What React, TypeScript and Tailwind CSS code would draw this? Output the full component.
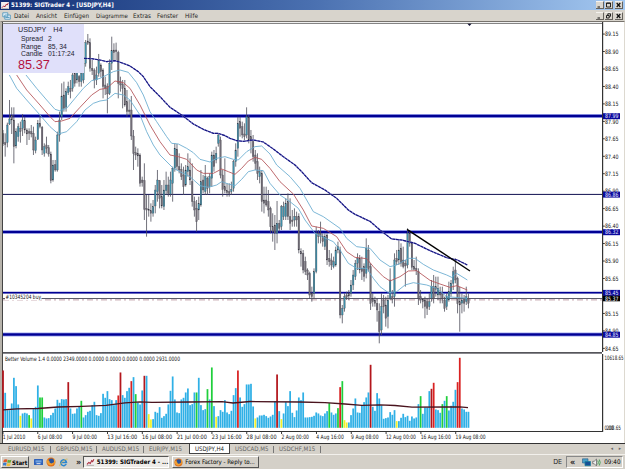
import React from 'react';

const STEP = 6.525;
const barX = (i: number) => 9 + i * STEP;

// high, low, body top, body bottom, 1 = rising (chart units, 3 per pixel)
const CANDLES = `330 378 340 372 0|340 410 368 374 0|308 382 315 368 1|240 315 297 312 1|262 342 285 300 0|262 430 300 380 0|325 385 335 378 1|310 365 320 350 1|305 368 325 335 0|282 348 300 325 1|290 340 302 330 0|325 375 330 342 0|325 360 335 340 0|315 352 335 342 0|320 405 340 390 0|350 400 360 392 1|300 360 310 358 1|285 325 310 320 0|318 405 322 390 0|370 410 380 400 1|350 400 375 385 0|375 410 383 402 0|395 490 402 482 0|420 485 435 480 1|420 455 434 450 0|335 455 345 450 1|275 365 300 345 1|190 300 228 290 1|185 275 225 265 0|205 275 215 262 1|185 225 200 218 1|180 235 205 215 0|140 215 165 205 1|150 200 160 190 0|145 190 155 180 1|165 200 170 185 0|150 200 160 185 1|120 190 130 180 1|60 140 68 130 1|42 75 63 70 0|55 155 68 145 0|120 165 145 152 0|145 205 150 180 0|140 195 165 180 1|102 170 120 160 1|130 172 135 155 0|145 235 150 200 0|170 225 195 205 0|190 280 200 222 0|118 225 130 220 1|50 150 92 130 1|70 120 90 98 0|68 120 90 95 0|92 235 98 190 0|170 215 185 195 0|180 265 192 205 0|180 260 205 255 0|210 290 245 275 0|240 285 270 275 0|228 360 270 348 0|330 450 348 400 0|380 420 398 405 0|385 440 400 408 0|400 500 405 490 0|470 500 480 488 0|430 600 482 568 0|525 650 565 570 0|525 590 568 572 0|550 605 572 580 0|540 590 560 580 1|495 580 510 558 1|450 545 480 515 1|480 565 482 535 0|495 565 530 558 0|480 570 510 560 1|455 525 495 512 1|470 530 495 520 0|455 530 480 522 1|440 545 445 490 1|370 455 385 445 1|372 450 388 440 0|400 460 440 450 0|430 480 448 470 0|440 525 465 500 0|435 500 450 495 1|400 470 440 455 1|415 495 450 480 0|430 560 485 545 0|530 590 545 570 0|540 635 565 605 0|530 600 550 570 1|450 560 485 555 1|465 520 480 510 0|435 525 470 515 1|470 525 475 505 0|460 520 470 500 1|395 500 405 475 1|390 455 405 440 0|380 430 400 420 1|340 380 345 370 1|350 475 360 465 0|450 530 465 508 0|415 520 500 512 0|490 530 512 518 0|490 530 515 520 0|485 525 508 515 1|420 515 425 505 1|370 440 390 425 1|290 410 310 385 1|290 350 305 325 0|305 355 320 345 0|310 360 342 350 0|262 355 290 345 1|285 370 292 360 0|330 400 350 360 0|345 425 365 410 0|390 450 405 430 0|400 480 425 460 0|440 490 455 470 1|450 575 460 545 0|500 580 540 550 0|500 560 540 555 0|510 590 545 570 0|560 640 565 620 0|580 665 620 635 0|585 690 615 640 0|543 670 610 640 1|600 635 610 625 0|555 630 560 620 1|545 600 560 590 1|535 600 550 590 1|520 600 545 590 0|535 630 590 610 0|570 620 600 605 0|565 620 590 600 1|575 620 590 600 0|580 700 590 690 0|685 740 695 702 0|690 760 700 750 0|710 765 725 755 0|745 780 750 765 0|755 835 760 825 0|800 845 820 830 0|745 835 755 820 1|620 760 640 755 1|630 670 640 650 0|605 670 640 650 0|640 680 650 665 0|640 690 650 680 1|640 735 645 720 0|690 740 715 725 0|700 750 720 735 0|710 745 725 740 1|680 740 690 735 1|665 700 680 690 1|680 895 690 885 0|855 910 865 885 1|820 875 830 865 1|815 840 825 832 0|810 840 820 828 0|780 830 795 820 1|750 810 765 795 1|720 780 730 770 1|700 750 715 730 1|705 760 715 750 0|710 780 745 755 0|730 785 740 770 0|655 775 685 760 1|675 755 690 745 0|730 870 740 850 0|820 860 835 845 0|830 860 840 850 0|835 905 850 870 0|850 970 875 935 0|820 945 860 930 1|825 880 840 860 0|830 920 855 895 0|825 925 840 890 1|745 840 780 835 1|810 850 830 838 0|700 860 720 830 1|690 735 715 725 0|660 735 690 720 1|670 740 685 730 0|680 745 720 740 0|720 800 730 738 0|625 745 640 735 1|630 680 640 670 0|665 750 670 742 0|720 750 740 748 0|710 765 745 752 0|745 855 755 835 0|810 850 830 840 0|835 865 838 845 0|830 895 840 860 0|835 885 845 865 0|820 870 845 860 1|780 845 800 835 1|765 850 800 835 0|770 830 800 808 0|770 840 805 825 1|800 850 818 825 0|800 850 822 835 0|830 875 840 865 0|820 870 830 860 1|785 845 815 840 1|780 830 790 820 1|740 810 755 790 1|715 790 750 780 0|770 880 775 850 0|800 935 845 855 0|820 880 840 850 1|825 875 835 850 0|800 855 830 845 1|820 865 835 850 0`
  .split('|')
  .map((c) => c.split(' ').map(Number));

// volume bar heights, suffix is the bar colour
const VOLUMES =
  '172d 105 53 53 73 150 125 70 36y 43 45 43 38g 28y 56 63 127 91g 91g 31 28 29 38 45 58 84 75 86 85 86 137d 58 42 43 58 65 81g 31 38 48 51 68 78 38 36 44 102 90 110 86 83 68 83 97r 166d 98 90 110 120 140r 152 101g 76 70 112 156d 156 41y 25y 26 48 45 62 30 35 42 70 111 154 85 46 44 85 90 106 118 68 71 106 106g 150 68 53 56 116g 85 181g 65 33y 35 53 48 83 46 41 51 98 119 172r 91 63 71 130 130 132 64 28y 31 37 37 39 35 30 34 39 80 160d 50 26y 43 77 65 110 45 32 52 91 83 106 31 31 32 33 36 46 43 37 35 43 50 74g 46 39 43 59g 122r 140g 23y 16y 16 38 58 88 46 45 66 77 91 106 189d 63 51 104 88 67 27 29 31 47 39 53 20y 20 30 42 32 36 21 34 28 31 71 95g 42 61 61 110 117d 135r 55 53 45 71g 81 95g 52 66 78 114 137r 210r 58 55 48 48'.split(' ');

const volumeColor: Record<string, string> = { d: '#b3161c', r: '#d92222', g: '#20cf3c', y: '#f2f22a' };

const SLOW_MA =
  '252,115 275,116 300,120 320,125 345,122 370,130 390,138 415,155 430,170 450,200 480,230 510,262 545,285 580,312 610,328 640,340 655,340 675,347 690,355 710,362 730,364 760,360 790,366 820,387 850,410 885,435 905,455 935,488 975,510 1010,535 1045,570 1065,583 1110,604 1140,630 1175,657 1205,660 1245,670 1290,692 1340,713 1372,720 1402,735';
const UPPER =
  '78,165 110,205 140,240 165,268 178,272 200,265 225,235 250,205 275,182 300,175 320,165 340,155 360,150 385,157 410,188 430,225 450,275 470,305 500,350 515,370 535,372 560,385 580,398 600,418 630,426 650,415 675,410 700,418 715,420 740,395 765,380 785,378 810,402 830,435 870,470 900,505 940,575 970,590 1020,625 1040,655 1070,680 1110,685 1140,720 1170,740 1190,735 1225,715 1245,715 1270,733 1300,750 1340,765 1355,772 1370,760 1402,780';
const MIDDLE =
  '50,165 80,210 120,255 150,290 165,305 185,303 210,295 240,262 275,225 300,208 320,205 345,183 370,188 390,205 420,255 450,315 480,365 510,405 535,410 560,418 590,450 610,460 640,460 665,447 685,455 705,463 725,445 745,423 765,412 785,418 810,445 840,485 880,522 910,570 935,618 970,625 1010,650 1040,695 1065,712 1100,716 1120,740 1150,770 1170,783 1200,770 1225,753 1250,752 1290,781 1320,792 1350,802 1370,797 1402,810';
const LOWER =
  '28,165 50,205 80,240 120,285 150,320 175,342 200,335 230,305 255,270 280,250 300,243 320,240 345,220 370,225 390,240 420,285 440,335 460,375 480,405 520,445 550,460 570,470 600,497 625,502 650,495 665,485 685,492 705,497 725,478 745,455 765,450 790,452 810,490 840,525 870,545 895,565 915,600 945,640 970,652 1000,665 1020,690 1045,730 1070,745 1100,745 1120,775 1140,800 1165,818 1190,815 1215,795 1240,788 1280,795 1310,805 1340,830 1402,835';

const PRICES = ['89.15', '88.90', '88.65', '88.40', '88.15', '87.90', '87.65', '87.40', '87.15', '86.90', '86.65', '86.40', '86.15', '85.90', '85.65', '85.40', '85.15', '84.90', '84.65'];

const LEVELS = [
  { price: '87.99', y: 94, h: 2.4 },
  { price: '86.86', y: 172.4, h: 1 },
  { price: '86.32', y: 210, h: 2.2 },
  { price: '85.45', y: 270.7, h: 1.8 },
  { price: '84.85', y: 312.5, h: 2.4 },
];

const DATES = ['1 Jul 2010', '6 Jul 08:00', '9 Jul 00:00', '13 Jul 16:00', '16 Jul 08:00', '21 Jul 00:00', '23 Jul 16:00', '28 Jul 08:00', '2 Aug 00:00', '4 Aug 16:00', '9 Aug 08:00', '12 Aug 00:00', '16 Aug 16:00', '19 Aug 08:00'];

const PriceChart = () => (
  <svg width="622" height="330" viewBox="2 0 622 330" className="block shrink-0 bg-white">
    {LEVELS.map(({ price, y, h }) => (
      <g key={price}>
        {h > 2 && <rect x="2" y={y - h / 2 - 0.8} width="600" height={h + 1.6} fill="#a0a8ee" />}
        <rect x="2" y={y - h / 2} width="600" height={h} fill={h > 1 ? '#000094' : '#101050'} />
      </g>
    ))}
    <rect x="2" y="276" width="600" height="1" fill="#5a5a68" />
    <line x1="3" x2="602" y1="277.9" y2="277.9" stroke="#c3a0a8" strokeWidth="1" strokeDasharray="6 3 2 3" />

    <g transform="translate(0 -2) scale(0.33333)" fill="none">
      {CANDLES.map(([h, l, t, b, up], i) => (
        <g key={i}>
          <line x1={barX(i)} x2={barX(i)} y1={h} y2={l} stroke="#4e4e5a" strokeWidth="2.4" />
          <rect x={barX(i) - 2.4} y={t} width="4.8" height={Math.max(b - t, 4)} fill={up ? '#3f8ea8' : '#716c76'} stroke="#34343e" strokeWidth="0.7" />
        </g>
      ))}
      <polyline points={UPPER} stroke="#68abd0" strokeWidth="2.6" />
      <polyline points={MIDDLE} stroke="#b45358" strokeWidth="2.6" />
      <polyline points={LOWER} stroke="#68abd0" strokeWidth="2.6" />
      <polyline points={SLOW_MA} stroke="#8a8ad0" strokeWidth="3.8" />
      <polyline points={SLOW_MA} stroke="#14147e" strokeWidth="3.4" strokeDasharray="9 2" />
    </g>

    <line x1="407" y1="207.3" x2="470" y2="249" stroke="#000" strokeWidth="1.4" />
    <rect x="5" y="273" width="36.5" height="5" fill="#fff" />
    <text x="5.5" y="277.3" fontSize="6" textLength="35.5" lengthAdjust="spacingAndGlyphs" fill="#111" fontFamily="'DejaVu Sans', sans-serif">#10345204 buy</text>
    <path d="M467 1.3h5l-2.5 2.6z" fill="#111133" />

    <rect x="602" y="0" width="1.2" height="330" fill="#333" />
    <g fontFamily="'DejaVu Sans', sans-serif" fontSize="6" fill="#111">
      {PRICES.map((p, i) =>
        p === '85.40' ? null : (
          <g key={p}>
            <rect x="603" y={11.6 + i * 17.46} width="1.8" height="0.9" fill="#222" />
            <text x="605" y={14.3 + i * 17.46} textLength="13.5" lengthAdjust="spacingAndGlyphs">{p}</text>
          </g>
        ),
      )}
      {LEVELS.map(({ price, y }) => (
        <g key={price}>
          <rect x="603" y={y - 2.8} width="17" height="6" fill="#0a0a9c" />
          <text x="605" y={y + 2.4} fill="#e6e6ff" textLength="13.5" lengthAdjust="spacingAndGlyphs">{price}</text>
        </g>
      ))}
      <rect x="603" y="273.7" width="17" height="5.6" fill="#000" />
      <text x="605" y="278.7" fill="#fff" textLength="13.5" lengthAdjust="spacingAndGlyphs">85.37</text>
    </g>
    <rect x="2" y="0" width="1" height="330" fill="#444" />
    <rect x="2" y="0.9" width="600" height="0.9" fill="#666" />
  </svg>
);

const VolumeChart = () => (
  <svg width="622" height="91" viewBox="2 352 622 91" className="block shrink-0 bg-white">
    <rect x="2" y="352" width="600" height="1.7" fill="#55555a" />
    <rect x="2" y="352" width="1" height="91" fill="#444" />
    {VOLUMES.map((v, i) => {
      const h = parseInt(v) / 3;
      return <rect key={i} x={barX(i) / 3 - 0.85} y={427.8 - h} width="1.75" height={h} fill={volumeColor[v.slice(-1)] || '#2fb0e6'} />;
    })}
    <polyline
      points="3,409.8 17,408.8 38,408.5 58,407 82,406.3 106,405.4 125,402.8 140,401.9 152,402.4 190,402 222,401.7 233,403 250,401.5 300,402 325,402.6 345,404 362,405.3 380,404.8 395,405.5 412,407.2 450,407 460,406.8 468,407.6"
      fill="none"
      stroke="#4a141e"
      strokeWidth="1.3"
    />
    <g fontFamily="'DejaVu Sans', sans-serif" fontSize="6" fill="#151515">
      <text x="5" y="361.2" textLength="175" lengthAdjust="spacingAndGlyphs">Better Volume 1.4 0.0000 2349.0000 0.0000 0.0000 0.0000 0.0000 2931.0000</text>
      <text x="604.5" y="359.8" textLength="19" lengthAdjust="spacingAndGlyphs">10618.65</text>
      <text x="604.5" y="429.7" textLength="9" lengthAdjust="spacingAndGlyphs">0.00</text>
      <text x="606.5" y="429.7" textLength="14.5" lengthAdjust="spacingAndGlyphs">208.65</text>
      {DATES.map((d, i) => (
        <g key={d}>
          <rect x={2.5 + i * 34.83} y="431" width="0.9" height="3" fill="#222" />
          <text x={2.8 + i * 34.83} y="439.2" textLength={i === 0 ? 22.5 : d.length > 11 ? 30 : d.includes('Jul') && i < 3 ? 24.5 : 27.5} lengthAdjust="spacingAndGlyphs">{d}</text>
        </g>
      ))}
    </g>
    <rect x="602" y="354" width="1.2" height="78" fill="#333" />
    <rect x="2" y="431" width="601" height="1" fill="#333" />
  </svg>
);

const ChartIcon = ({ className }: { className?: string }) => (
  <svg viewBox="0 0 9 8" className={className}>
    <rect width="9" height="8" fill="#f3eeee" />
    <path d="M1 6.5 3 4.5 4.5 5.5 6 2.5 7 3.5 8.3 1" fill="none" stroke="#a82a3a" strokeWidth="1.1" />
    <path d="M0.5 7.5h8" stroke="#666" strokeWidth="0.5" />
  </svg>
);

const Firefox = ({ className }: { className?: string }) => (
  <svg viewBox="0 0 10 10" className={className}>
    <circle cx="5" cy="5" r="4.5" fill="#e0701c" />
    <circle cx="5.3" cy="4.2" r="2.7" fill="#28529c" />
    <path d="M.7 3c1 .3 1.7 0 2.6.9.5.8 0 1.6 1 2.2 1.2.7 2.4.2 3.5-1.1C8 8 4.5 9 2.6 7.6 1.2 6.6.7 5 .7 3z" fill="#f1a132" />
    <path d="M7.5 1.3c2 1.5 2.2 4.5.8 6.2.4-2 .3-4-.8-6.2z" fill="#f6c443" />
  </svg>
);

const InternetExplorer = () => (
  <svg viewBox="0 0 10 10" className="size-[9px]">
    <path d="M8 6.7A3.2 3.2 0 1 1 8.3 5H2.6" fill="none" stroke="#2b87cf" strokeWidth="1.7" />
    <path d="M.8 9C0 7 7 .3 9.5 1.3" fill="none" stroke="#dcb548" strokeWidth=".9" />
  </svg>
);

const Start = () => (
  <svg viewBox="0 0 10 10" className="size-[9px] shrink-0">
    <path d="M1 2q2-1.2 3.8-.2l-.7 3q-1.8-.8-3.8 0z" fill="#e25a2b" />
    <path d="M5.3 2q2 .8 4 0l-.7 3q-2 .8-4 0z" fill="#69a83a" />
    <path d="M.2 5.5q2-1 3.8 0l-.7 3q-1.6-.9-3.5 0z" fill="#3b7cc9" />
    <path d="M4.5 5.7q2 .8 4 0l-.7 3q-2 .8-4 0z" fill="#f0bd34" />
  </svg>
);

const WindowButton = ({ kind }: { kind: 'min' | 'max' | 'restore' | 'close' }) => (
  <span className="flex h-[8px] w-[8px] items-center justify-center border-t border-r border-b border-t-[#f4f2ee] border-r-[#66635e] border-b-[#66635e] bg-[#dad6ce]">
    <svg viewBox="0 0 7 6" className="h-[6px] w-[7px]" fill="none" stroke="#111" strokeWidth="1">
      {kind === 'min' && <path d="M1.5 5h2.500" />}
      {kind === 'max' && <path d="M1.5 1h4v4h-4zM1.5 1.3h4" strokeWidth=".9" />}
      {kind === 'restore' && <path d="M2.8 2V.8h2.7v2.500h-1M1.5 2.5h2.7v2.500h-2.7z" strokeWidth=".9" />}
      {kind === 'close' && <path d="m1.7 1 3.6 4M5.3 1l-3.6 4" strokeWidth="1.2" />}
    </svg>
  </span>
);

const WindowButtons = ({ middle }: { middle: 'max' | 'restore' }) => (
  <div className="ml-auto flex pr-[2px]">
    <WindowButton kind="min" />
    <span className="w-px" />
    <WindowButton kind={middle} />
    <span className="w-[2px]" />
    <WindowButton kind="close" />
  </div>
);

const Quote = () => (
  <div className="absolute top-[2px] left-px h-[49px] w-[81px] bg-[#e0e0fa] font-['Liberation_Sans',sans-serif] text-[#1c1c30]">
    <div className="flex gap-[7px] pt-[1px] pl-[15px] text-[7.2px] leading-[9px]">
      <span>USDJPY</span>
      <span>H4</span>
    </div>
    <div className="grid grid-cols-[27px_1fr] pt-[1px] pl-[18px] text-[6.8px] leading-[7.6px]">
      <span>Spread</span>
      <span>2</span>
      <span>Range</span>
      <span>85, 34</span>
      <span>Candle</span>
      <span>01:17:24</span>
    </div>
    <div className="pt-px pl-[15px] text-[12.7px] leading-[13px] text-[#b3123e]">85.37</div>
  </div>
);

const Divider = () => <span className="mx-[5px] h-[7px] w-px bg-[#777]" />;

export default function App() {
  return (
    <div className="flex h-[469px] w-[625px] flex-col overflow-hidden bg-[#d5d1c9] font-['DejaVu_Sans_Condensed','DejaVu_Sans',sans-serif] text-[6.3px] whitespace-nowrap text-[#222]">
      <header className="flex h-[10px] shrink-0 items-center bg-linear-to-r from-[#143076] via-[#4a70b0] to-[#a5c9f1]">
        <ChartIcon className="ml-[1px] h-[7px] w-[8px]" />
        <h1 className="ml-[2px] text-[6.1px] font-bold text-white">51399: SIGTrader 4 - [USDJPY,H4]</h1>
        <WindowButtons middle="max" />
      </header>

      <nav className="flex h-[11px] shrink-0 items-center bg-[#d8d4cc]">
        <svg viewBox="0 0 9 8" className="ml-[2px] h-[8px] w-[9px]" fill="#e9f4fb" stroke="#5299bd" strokeWidth=".9">
          <path d="M.8.8h5v4h-5zM2.8 3h5.500v4.200H2.8z" />
          <path d="M3.5 5.5h4" />
        </svg>
        <span className="ml-[3px] w-[22px]">Datei</span>
        <span className="w-[28px]">Ansicht</span>
        <span className="w-[32px]">Einfügen</span>
        <span className="w-[37px] text-[6px]">Diagramme</span>
        <span className="w-[24px]">Extras</span>
        <span className="w-[28px]">Fenster</span>
        <span>Hilfe</span>
        <WindowButtons middle="restore" />
      </nav>

      <main className="relative flex h-[422px] shrink-0 flex-col border-t border-r border-l-2 border-t-[#77736d] border-r-[#ddd9d0] border-l-[#b7b3ab] bg-white">
        <div className="relative">
          <PriceChart />
          <Quote />
        </div>
        <VolumeChart />
      </main>

      <div className="flex h-[11px] shrink-0 items-center border-t border-[#333] text-[6.1px] text-[#666]">
        <span className="w-[37px] pl-[8px] box-content w-[36px]">EURUSD,M15</span>
        <Divider />
        <span className="w-[35px]">GBPUSD,M15</span>
        <Divider />
        <span className="w-[36px]">AUDUSD,M15</span>
        <Divider />
        <span className="w-[35px]">EURJPY,M15</span>
        <span className="ml-[5px] flex h-[10px] w-[41px] items-center justify-center border-r border-b border-l border-[#444] bg-white text-[#222]">USDJPY,H4</span>
        <span className="ml-[5px] w-[33px]">USDCAD,M5</span>
        <Divider />
        <span className="w-[36px]">USDCHF,M15</span>
        <Divider />
        <span className="ml-auto pr-[4px] text-[5px]">◂&nbsp;&nbsp;&nbsp;&nbsp;▸</span>
      </div>

      <footer className="flex h-[15px] shrink-0 items-center border-t border-[#f2f0ec] bg-[#d4d0c8]">
        <div className="ml-[1px] flex h-[12px] w-[28px] items-center border border-t-white border-r-[#555] border-b-[#555] border-l-white pl-[1px] text-[6px] font-bold text-black">
          <Start />
          <span>Start</span>
        </div>
        <svg viewBox="0 0 9 8" className="ml-[5px] h-[8px] w-[9px]">
          <rect y="1" width="9" height="6" rx=".5" fill="#2f62bb" />
          <path d="M1.5 2.3h6v2.200h-6z" fill="#72a3df" />
          <path d="M2.5 5.7h4" stroke="#e9edf5" />
        </svg>
        <Firefox className="ml-[3px] size-[10px]" />
        <span className="ml-[3px]"><InternetExplorer /></span>
        <span className="ml-[8px] text-[9px] leading-[9px] font-bold">»</span>
        <div className="ml-[2px] flex h-[12px] w-[86px] items-center border border-t-[#555] border-r-white border-b-white border-l-[#555] bg-[#eeece8] pl-[2px] text-[6.1px] font-bold text-black">
          <ChartIcon className="mr-[2px] h-[8px] w-[9px]" />
          51399: SIGTrader 4 - ...
        </div>
        <div className="ml-[3px] flex h-[12px] w-[87px] items-center border border-t-white border-r-[#555] border-b-[#555] border-l-white pl-[1px] text-[6.1px] text-black">
          <Firefox className="mr-[2px] size-[9px]" />
          Forex Factory - Reply to...
        </div>
        <span className="ml-auto text-[7px]">DE</span>
        <div className="mr-[2px] ml-[4px] flex h-[12px] w-[57px] items-center border border-t-[#888] border-r-white border-b-white border-l-[#888] pl-[3px]">
          <span className="text-[9px] leading-[9px] font-bold">«</span>
          <svg viewBox="0 0 9 9" className="ml-[7px] size-[9px]">
            <path d="M.5.8h5.500v4.200H.5z" fill="#4a9fc8" stroke="#265a87" strokeWidth=".6" />
            <path d="M3 3.5h5.500v4.200H3z" fill="#174f94" stroke="#1b7f9c" strokeWidth=".8" />
          </svg>
          <svg viewBox="0 0 9 9" className="ml-[1px] size-[9px]" fill="none" strokeWidth=".9">
            <path d="M.7 3.3h1.500L4.5 1v7L2.2 5.7H.7z" fill="#eee" stroke="#777" />
            <path d="M5.8 2.5q1 2 0 4M7.3 1.5q1.8 3 0 6" stroke="#3b9c4d" />
          </svg>
          <span className="ml-[3px] text-black">09:40</span>
        </div>
      </footer>
    </div>
  );
}
